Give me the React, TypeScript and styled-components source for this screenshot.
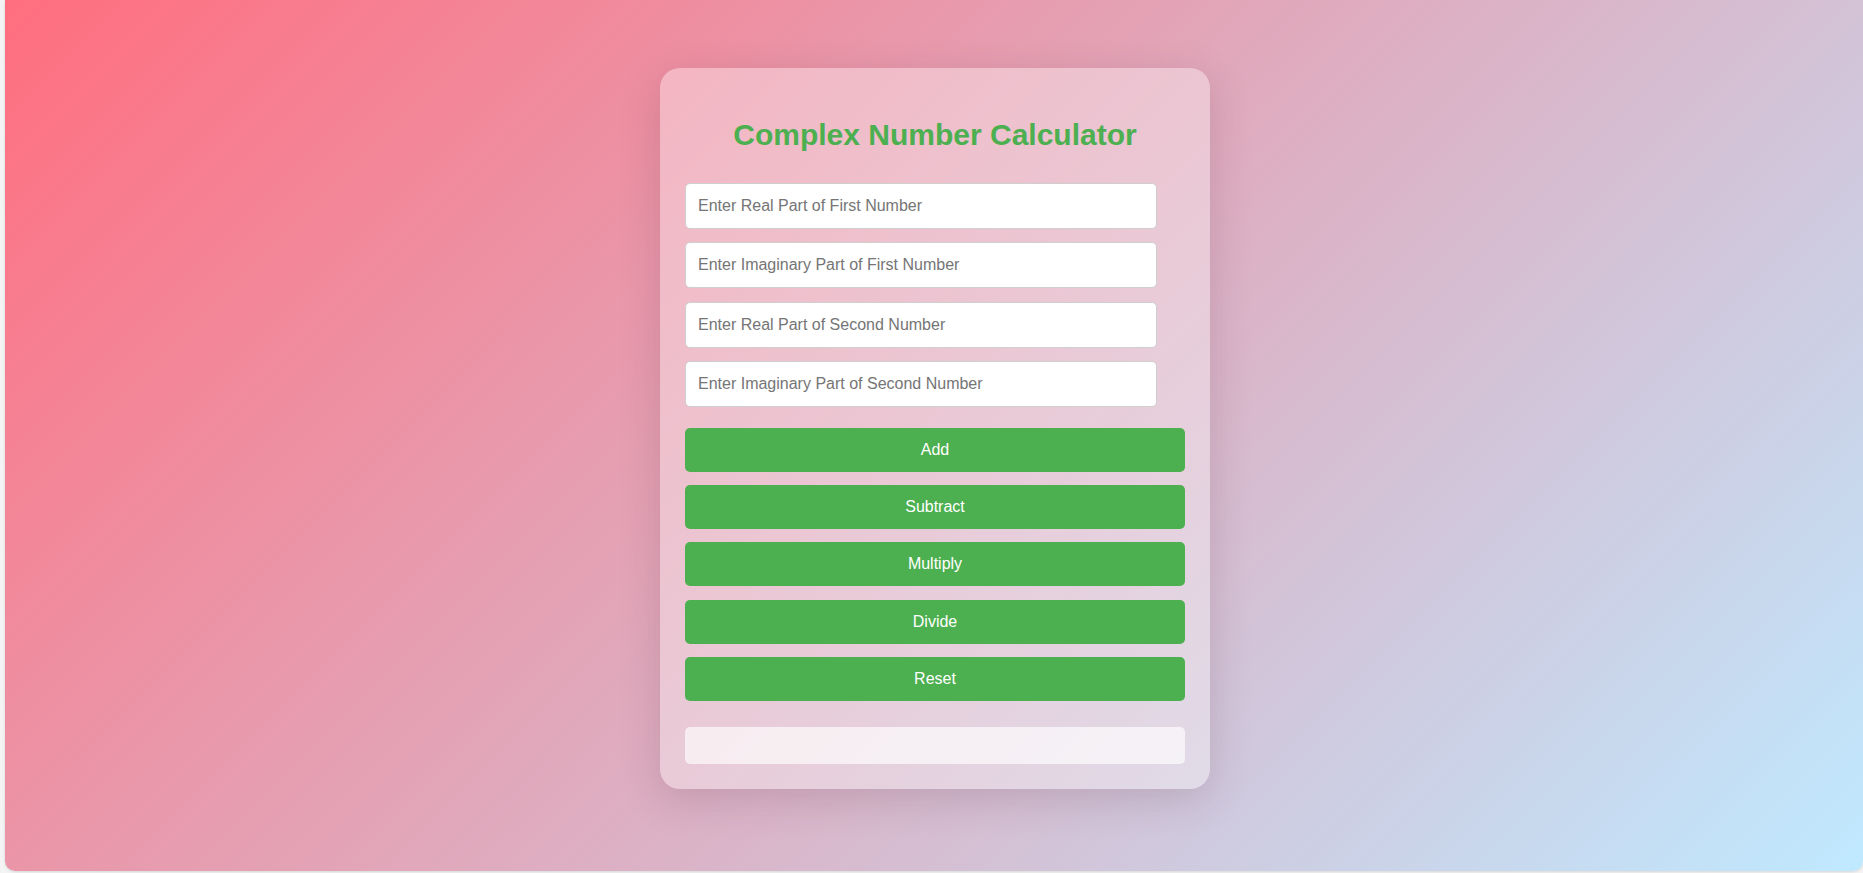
import React, { useState } from 'react'
import styled, { createGlobalStyle } from 'styled-components'

const GlobalStyle = createGlobalStyle`
  html, body {
    margin: 0;
    padding: 0;
    background: #f4f4f4;
    font-family: 'Liberation Sans', Arial, sans-serif;
  }
  * {
    box-sizing: border-box;
  }
`

type Complex = { re: number; im: number }

const fields = [
  { key: 'a', placeholder: 'Enter Real Part of First Number' },
  { key: 'b', placeholder: 'Enter Imaginary Part of First Number' },
  { key: 'c', placeholder: 'Enter Real Part of Second Number' },
  { key: 'd', placeholder: 'Enter Imaginary Part of Second Number' },
]

const format = ({ re, im }: Complex) => {
  const r = Math.round(re * 1000) / 1000
  const i = Math.round(im * 1000) / 1000
  return `${r} ${i < 0 ? '-' : '+'} ${Math.abs(i)}i`
}

const App = () => {
  const [values, setValues] = useState<Record<string, string>>({ a: '', b: '', c: '', d: '' })
  const [result, setResult] = useState('')

  const first: Complex = { re: Number(values.a) || 0, im: Number(values.b) || 0 }
  const second: Complex = { re: Number(values.c) || 0, im: Number(values.d) || 0 }

  const operations: { label: string; run: () => string }[] = [
    { label: 'Add', run: () => format({ re: first.re + second.re, im: first.im + second.im }) },
    { label: 'Subtract', run: () => format({ re: first.re - second.re, im: first.im - second.im }) },
    {
      label: 'Multiply',
      run: () =>
        format({
          re: first.re * second.re - first.im * second.im,
          im: first.re * second.im + first.im * second.re,
        }),
    },
    {
      label: 'Divide',
      run: () => {
        const den = second.re * second.re + second.im * second.im
        if (!den) return 'Cannot divide by zero'
        return format({
          re: (first.re * second.re + first.im * second.im) / den,
          im: (first.im * second.re - first.re * second.im) / den,
        })
      },
    },
  ]

  const reset = () => {
    setValues({ a: '', b: '', c: '', d: '' })
    setResult('')
  }

  return (
    <Page>
      <GlobalStyle />
      <Backdrop>
        <Card>
          <Title>Complex Number Calculator</Title>
          <InputGroup>
            {fields.map((field) => (
              <NumberInput
                key={field.key}
                type="number"
                placeholder={field.placeholder}
                value={values[field.key]}
                onChange={(e) => setValues({ ...values, [field.key]: e.target.value })}
              />
            ))}
          </InputGroup>
          <ButtonGroup>
            {operations.map((op) => (
              <ActionButton key={op.label} onClick={() => setResult(op.run())}>
                {op.label}
              </ActionButton>
            ))}
            <ActionButton onClick={reset}>Reset</ActionButton>
          </ButtonGroup>
          <Result>{result}</Result>
        </Card>
      </Backdrop>
    </Page>
  )
}

const Page = styled.div`
  padding-left: 5px;
  min-height: 873px;
`

const Backdrop = styled.main`
  height: 871px;
  display: flex;
  justify-content: center;
  align-items: flex-start;
  padding: 68px 0 0 2px;
  background: linear-gradient(135deg, #ff6e7f 0%, #bfe9ff 100%);
  border-radius: 0 0 10px 10px;
  box-shadow: 0 1px 3px rgba(0, 0, 0, 0.12);
`

const Card = styled.section`
  width: 550px;
  display: flex;
  flex-direction: column;
  padding: 0 25px 25px;
  border-radius: 20px;
  background: rgba(255, 255, 255, 0.35);
  box-shadow: 0 10px 40px rgba(80, 40, 60, 0.18);
`

const Title = styled.h2`
  margin: 50px 0 31px;
  font-size: 30px;
  font-weight: 700;
  line-height: normal;
  text-align: center;
  color: #4caf50;
`

const InputGroup = styled.div`
  display: flex;
  flex-direction: column;
  align-items: flex-start;
  gap: 13.4px;
`

const NumberInput = styled.input`
  width: 472px;
  height: 46px;
  padding: 0 12px;
  border: 1px solid #cfcfcf;
  border-radius: 5px;
  background: #fff;
  font-family: 'Liberation Sans', Arial, sans-serif;
  font-size: 16px;
  color: #333;
  outline: none;
  -moz-appearance: textfield;
  &::placeholder {
    color: #757575;
  }
  &::-webkit-outer-spin-button,
  &::-webkit-inner-spin-button {
    -webkit-appearance: none;
    margin: 0;
  }
`

const ButtonGroup = styled.div`
  margin-top: 20.5px;
  display: flex;
  flex-direction: column;
  gap: 13.33px;
`

const ActionButton = styled.button`
  width: 100%;
  height: 44px;
  padding: 0;
  border: none;
  border-radius: 5px;
  background: #4caf50;
  color: #fff;
  font-family: 'Liberation Sans', Arial, sans-serif;
  font-size: 16px;
  cursor: pointer;
  &:hover {
    background: #45a049;
  }
`

const Result = styled.div`
  margin-top: 26px;
  min-height: 37px;
  padding: 9px 12px;
  border-radius: 5px;
  background: rgba(255, 255, 255, 0.65);
  font-size: 16px;
  color: #333;
  text-align: center;
`

export default App
